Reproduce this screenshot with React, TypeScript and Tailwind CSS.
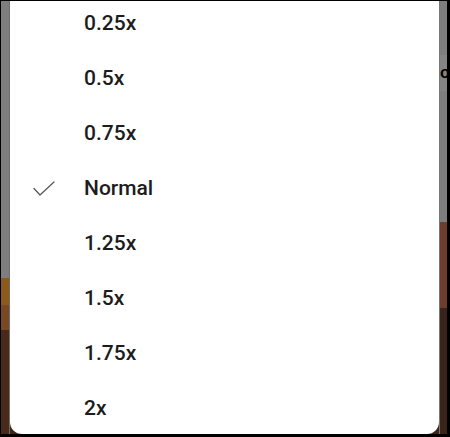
const speeds = ["0.25x", "0.5x", "0.75x", "Normal", "1.25x", "1.5x", "1.75x", "2x"];

const CheckIcon = () => (
  <svg width="22" height="16" viewBox="0 0 22 16" fill="none">
    <path d="M1 7.5 L7 14 L21 1" stroke="#5a5a5a" strokeWidth="1.3" strokeLinecap="round" strokeLinejoin="round" />
  </svg>
);

const App = () => {
  const selected = "Normal";

  return (
    <div className="w-[450px] h-[437px] bg-black border-t border-l-1 border-r-[3px] border-b-[3px] border-black overflow-hidden">
      <div className="flex h-[433px]">
        {/* left edge of the dimmed video */}
        <div className="w-[9px] flex flex-col border-r border-[#b8b8b8]/60">
          <div className="h-[277px] bg-[#7e7e7e]" />
          <div className="h-[27px] bg-[#8c5a1b]" />
          <div className="h-[25px] bg-[#7a4822]" />
          <div className="flex-1 bg-[#48291a]" />
        </div>

        {/* speed menu sheet */}
        <div className="flex-1 bg-[#3e2418]">
          <div className="h-full bg-white rounded-b-[12px] overflow-hidden">
            <ul className="-mt-[5px]" style={{ fontFamily: 'Roboto, "Liberation Sans", Arial, sans-serif' }}>
              {speeds.map((s) => (
                <li key={s} className="h-[55px] flex items-center">
                  <div className="w-[74px] pl-[23px] flex items-center">
                    {s === selected && <CheckIcon />}
                  </div>
                  <span className="text-[21px] font-medium text-[#1c1c1c]">{s}</span>
                </li>
              ))}
            </ul>
          </div>
        </div>

        {/* right edge of the dimmed video */}
        <div className="w-[8px] flex flex-col border-l border-[#c8c8c8]/60 overflow-hidden">
          <div className="h-[54px] bg-[#7e7e7e]" />
          <div className="h-[36px] bg-[#858585] flex items-center">
            <span className="text-[16px] font-bold text-black leading-none" style={{ fontFamily: '"Liberation Sans", Arial, sans-serif' }}>o</span>
          </div>
          <div className="h-[131px] bg-[#7e7e7e]" />
          <div className="h-[86px] bg-[#6e3d2b]" />
          <div className="flex-1 bg-[#3a2318]" />
        </div>
      </div>
    </div>
  );
};

export default App;
